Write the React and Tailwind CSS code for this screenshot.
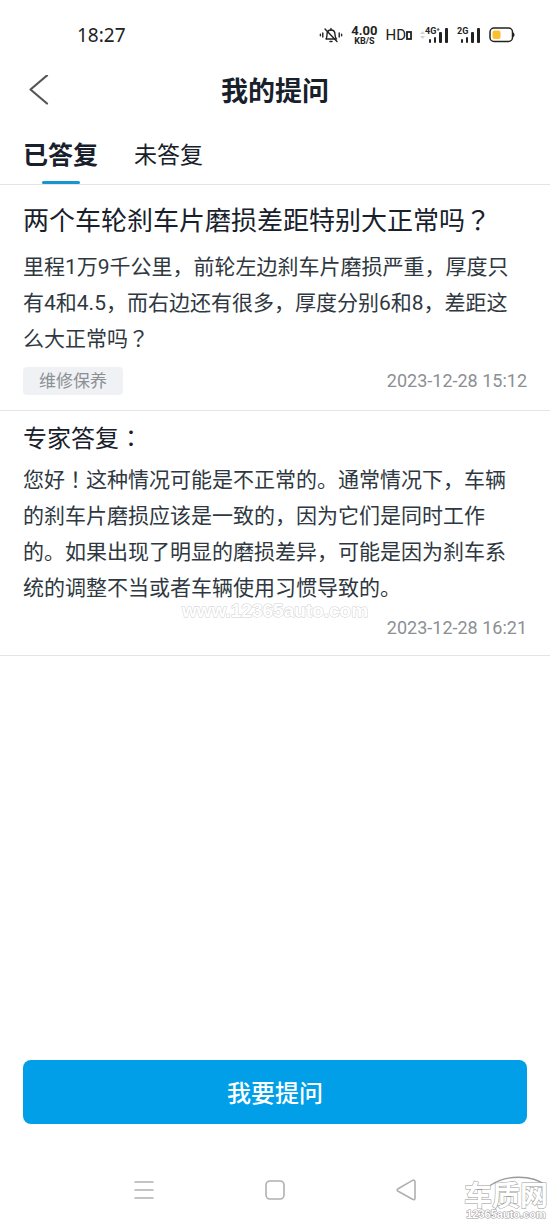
import React, { useState } from "react";

const TABS = [
  { id: "answered", label: "已答复" },
  { id: "pending", label: "未答复" },
];

const question = {
  title: "两个车轮刹车片磨损差距特别大正常吗？",
  body: "里程1万9千公里，前轮左边刹车片磨损严重，厚度只有4和4.5，而右边还有很多，厚度分别6和8，差距这么大正常吗？",
  tag: "维修保养",
  time: "2023-12-28 15:12",
};

const answer = {
  title: "专家答复：",
  body: "您好！这种情况可能是不正常的。通常情况下，车辆的刹车片磨损应该是一致的，因为它们是同时工作的。如果出现了明显的磨损差异，可能是因为刹车系统的调整不当或者车辆使用习惯导致的。",
  time: "2023-12-28 16:21",
};

// ？ ！ ： sit in the middle of their square in the TC face
const CjkText = ({ children }) =>
  children.split(/([？！：])/).map((part, i) =>
    i % 2 ? (
      <span key={i} lang="zh-TW" className="font-['Noto_Sans_CJK_TC',sans-serif] leading-none">
        {part}
      </span>
    ) : (
      part
    )
  );

const MutedBell = () => (
  <svg width="24" height="18" viewBox="0 0 24 18" fill="none" stroke="#222" strokeWidth="1.4" strokeLinecap="round">
    <path d="M7 13h10.5c-1.2-1.2-1.5-2-1.5-4.500C16 5.600 14.400 4 12 4S8 5.600 8 8.500C8 11 7.800 11.800 7 13Z" strokeLinejoin="round" />
    <path d="M12 2.500V4M11 15.500h2M6 3l12 12.500" />
    <path d="M3.800 7v4M1.400 8.200v1.600M20.200 7v4M22.600 8.200v1.600" />
  </svg>
);

const Signal = ({ label }) => (
  <span className="relative block h-[18px] w-6">
    <svg width="24" height="18" viewBox="0 0 24 18" fill="#222" className="block">
      <rect x="4" y="13" width="2" height="4" rx="1" />
      <rect x="9" y="11" width="2" height="6" rx="1" />
      <rect x="14" y="6" width="3" height="11" rx="1" />
      <rect x="20" y="2" width="3" height="15" rx="1" />
    </svg>
    <span className="absolute top-0 left-0 text-[9px] leading-[10px] font-bold">{label}</span>
  </span>
);

const Battery = () => (
  <svg width="27" height="16" viewBox="0 0 27 16" fill="none">
    <rect x="1" y="1" width="22.500" height="13.500" rx="4" stroke="#222" strokeWidth="1.500" />
    <path d="M24 5.500c2 .6 2 4 0 4.600Z" fill="#222" />
    <rect x="3.500" y="3.500" width="8" height="8.500" rx="2" fill="#fbc02d" />
  </svg>
);

const StatusBar = () => (
  <div className="flex h-[70px] items-center justify-between pr-[34px] pl-[77px] text-[#222]">
    <span className="font-['Noto_Sans'] text-[19px] leading-6">18:27</span>
    <div className="flex items-center gap-2">
      <MutedBell />
      <span className="flex flex-col items-center font-bold">
        <span className="text-[13px] leading-3">4.00</span>
        <span className="text-[9px] leading-[9px]">KB/S</span>
      </span>
      <span className="flex items-center">
        <span className="text-[15px] leading-5">HD</span>
        <svg width="6" height="10" viewBox="0 0 6 10" fill="none" stroke="#222" strokeWidth="1.800">
          <rect x="1" y="2" width="4" height="7" />
        </svg>
      </span>
      <span className="flex items-center">
        <svg width="5" height="10" viewBox="0 0 5 10" fill="#d4d4d4">
          <path d="M0 4l2.500-3L5 4ZM0 6h5L2.500 9Z" />
        </svg>
        <Signal label="4G⁺" />
      </span>
      <Signal label="2G" />
      <Battery />
    </div>
  </div>
);

const Header = () => (
  <header className="grid h-[42px] grid-cols-[1fr_auto_1fr] items-center px-[23px]">
    <button type="button" aria-label="返回" className="flex h-10 w-10 items-center pl-[6px]">
      <svg width="20" height="32" viewBox="0 0 20 32" fill="none" stroke="#555" strokeWidth="2.200" strokeLinecap="round" strokeLinejoin="round">
        <path d="M18 0.500 1.500 14.500 18 28.500" />
      </svg>
    </button>
    <h1 className="pt-[2px] text-[27px] leading-10 font-bold">我的提问</h1>
  </header>
);

const Tabs = ({ active, onChange }) => (
  <div role="tablist" className="flex h-[73px] items-end gap-9 border-b border-[#e3e4e6] px-[23px]">
    {TABS.map((tab) => (
      <button
        key={tab.id}
        type="button"
        role="tab"
        aria-selected={active === tab.id}
        onClick={() => onChange(tab.id)}
        className={`flex flex-col items-center ${active === tab.id ? "text-[25px] font-bold" : "text-[23px]"}`}
      >
        <span className="leading-9">{tab.label}</span>
        <span className={`mt-[7px] h-[3px] w-[38px] rounded-full ${active === tab.id ? "bg-[#1795cf]" : "bg-transparent"}`} />
      </button>
    ))}
  </div>
);

const QuestionCard = () => (
  <article className="border-b border-[#e3e4e6] px-[23px] pt-[18px] pb-[15px]">
    <h2 className="text-[26px] leading-9">
      <CjkText>{question.title}</CjkText>
    </h2>
    <p className="mt-[10px] pr-2 text-[21px] leading-9 text-[#2f3841]">
      <CjkText>{question.body}</CjkText>
    </p>
    <div className="mt-[10px] flex items-center justify-between text-[#8c8f93]">
      <span className="flex h-7 items-center rounded bg-[#eff1f5] px-4 pt-[2px] text-[17px]">{question.tag}</span>
      <time className="text-lg leading-6">{question.time}</time>
    </div>
  </article>
);

const AnswerCard = () => (
  <article className="relative border-b border-[#e3e4e6] px-[23px] pt-[10px] pb-[15px]">
    <h2 className="text-2xl leading-9">
      <CjkText>{answer.title}</CjkText>
    </h2>
    <p className="mt-[5px] pr-2 text-[21px] leading-9 text-[#2f3841]">
      <CjkText>{answer.body}</CjkText>
    </p>
    <time className="mt-[10px] block text-right text-lg leading-6 text-[#8c8f93]">{answer.time}</time>
    <span className="pointer-events-none absolute inset-x-0 bottom-8 text-center font-['Liberation_Sans'] text-[19px] leading-6 font-bold text-white [-webkit-text-stroke:1px_#d0d0d0] [paint-order:stroke_fill]">
      www.12365auto.com
    </span>
  </article>
);

const BrandMark = () => (
  <div className="pointer-events-none absolute right-[2px] bottom-[2px] flex flex-col items-center text-white [paint-order:stroke_fill]">
    <svg width="84" height="10" viewBox="0 0 84 10" fill="none" stroke="#9a9a9a" strokeWidth="1.300">
      <path d="M26 9.500C42-1.500 68-1.500 82 9.500" />
    </svg>
    <span className="text-[28px] leading-[22px] font-bold [-webkit-text-stroke:1px_#999]">车质网</span>
    <span className="pt-px font-['Liberation_Sans'] text-[11px] leading-[11px] font-bold [-webkit-text-stroke:1px_#999]">
      12365auto.com
    </span>
  </div>
);

const SystemNav = () => (
  <nav className="grid h-16 grid-cols-3 items-center justify-items-center px-[78px]">
    <button type="button" aria-label="菜单">
      <svg width="20" height="20" viewBox="0 0 20 20" stroke="#b0b0b0" strokeWidth="1.600">
        <path d="M.5 2h19M.5 10h19M.5 18h19" />
      </svg>
    </button>
    <button type="button" aria-label="主页">
      <svg width="20" height="20" viewBox="0 0 20 20" fill="none" stroke="#b0b0b0" strokeWidth="1.600">
        <rect x="1" y="1" width="18" height="18" rx="4" />
      </svg>
    </button>
    <button type="button" aria-label="后退">
      <svg width="20" height="22" viewBox="0 0 20 22" fill="none" stroke="#b0b0b0" strokeWidth="1.600" strokeLinejoin="round">
        <path d="M1.700 10 16.500 1.400Q19 .5 19 3v16q0 2.500-2.500 1.300L1.700 12q-1.200-1 0-2Z" />
      </svg>
    </button>
  </nav>
);

const App = () => {
  const [active, setActive] = useState("answered");

  return (
    <div
      lang="zh-CN"
      className="relative flex min-h-screen flex-col bg-white font-[Roboto,'Noto_Sans_CJK_SC',sans-serif] text-[#18212b]"
    >
      <StatusBar />
      <Header />
      <Tabs active={active} onChange={setActive} />
      <main className="flex-1">
        {active === "answered" && (
          <>
            <QuestionCard />
            <AnswerCard />
          </>
        )}
      </main>
      <div className="mb-[34px] px-[23px]">
        <button type="button" className="h-16 w-full rounded-lg bg-[#009fe8] pt-1 text-2xl font-medium text-white">
          我要提问
        </button>
      </div>
      <SystemNav />
      <BrandMark />
    </div>
  );
};

export default App;
